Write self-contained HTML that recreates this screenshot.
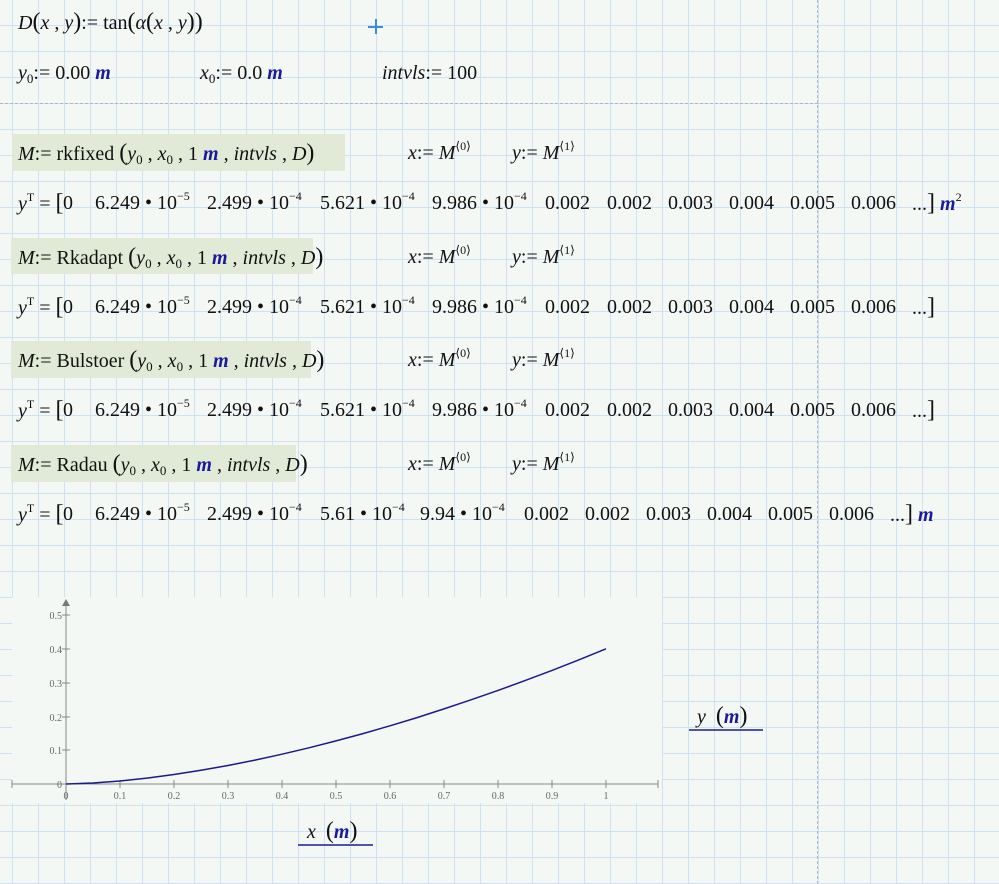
<!DOCTYPE html>
<html><head><meta charset="utf-8"><style>
body{margin:0;width:999px;height:884px;overflow:hidden;position:relative;background-color:#f4f8f5;
background-image:linear-gradient(to right,#cfe2f3 1px,transparent 1px),linear-gradient(to bottom,#cfe2f3 1px,transparent 1px);
background-size:26px 26px;background-position:12px 25px;font-family:"Liberation Serif",serif;color:#111;}
.t{position:absolute;font-size:20px;line-height:24px;white-space:nowrap}
i{font-style:italic}
.u{color:#1a1a9a;font-weight:bold;font-style:italic}
.g{position:absolute;background:#e1ead6}
sup{font-size:12px;vertical-align:9px;line-height:0}
sub{font-size:13px;vertical-align:-4px;line-height:0}
.p{font-size:24px}
</style></head><body>
<div style="position:absolute;left:817px;top:0;height:884px;border-left:1.5px dashed #a9b9c6"></div>
<div style="position:absolute;left:0;top:103px;width:818px;border-top:1.5px dashed #a9b9c6"></div>
<div style="position:absolute;left:368px;top:26px;width:15px;height:1.5px;background:#3b8be0"></div>
<div style="position:absolute;left:375px;top:19px;width:1.5px;height:15px;background:#3b8be0"></div>

<div class="t" style="left:18px;top:10px"><i>D</i><span class="p">(</span><i>x</i> , <i>y</i><span class="p">)</span>:= tan<span class="p">(</span><i>α</i><span class="p">(</span><i>x</i> , <i>y</i><span class="p">))</span></div>
<div class="t" style="left:18px;top:61px"><i>y</i><sub>0</sub>:= 0.00 <span class="u">m</span></div>
<div class="t" style="left:200px;top:61px"><i>x</i><sub>0</sub>:= 0.0 <span class="u">m</span></div>
<div class="t" style="left:382px;top:61px"><i>intvls</i>:= 100</div>

<div class="g" style="left:12px;top:134px;width:333px;height:37px"></div>
<div class="g" style="left:11px;top:238px;width:302px;height:36px"></div>
<div class="g" style="left:11px;top:341px;width:300px;height:37px"></div>
<div class="g" style="left:11px;top:445px;width:285px;height:37px"></div>

<div class="t" style="left:18px;top:141px"><i>M</i>:= rkfixed <span class="p">(</span><i>y</i><sub>0</sub> , <i>x</i><sub>0</sub> , 1 <span class="u">m</span> , <i>intvls</i> , <i>D</i><span class="p">)</span></div>
<div class="t" style="left:18px;top:245px"><i>M</i>:= Rkadapt <span class="p">(</span><i>y</i><sub>0</sub> , <i>x</i><sub>0</sub> , 1 <span class="u">m</span> , <i>intvls</i> , <i>D</i><span class="p">)</span></div>
<div class="t" style="left:18px;top:348px"><i>M</i>:= Bulstoer <span class="p">(</span><i>y</i><sub>0</sub> , <i>x</i><sub>0</sub> , 1 <span class="u">m</span> , <i>intvls</i> , <i>D</i><span class="p">)</span></div>
<div class="t" style="left:18px;top:452px"><i>M</i>:= Radau <span class="p">(</span><i>y</i><sub>0</sub> , <i>x</i><sub>0</sub> , 1 <span class="u">m</span> , <i>intvls</i> , <i>D</i><span class="p">)</span></div>

<div class="t" style="left:408px;top:141px"><i>x</i>:= <i>M</i><sup>⟨0⟩</sup></div><div class="t" style="left:512px;top:141px"><i>y</i>:= <i>M</i><sup>⟨1⟩</sup></div>
<div class="t" style="left:408px;top:245px"><i>x</i>:= <i>M</i><sup>⟨0⟩</sup></div><div class="t" style="left:512px;top:245px"><i>y</i>:= <i>M</i><sup>⟨1⟩</sup></div>
<div class="t" style="left:408px;top:348px"><i>x</i>:= <i>M</i><sup>⟨0⟩</sup></div><div class="t" style="left:512px;top:348px"><i>y</i>:= <i>M</i><sup>⟨1⟩</sup></div>
<div class="t" style="left:408px;top:452px"><i>x</i>:= <i>M</i><sup>⟨0⟩</sup></div><div class="t" style="left:512px;top:452px"><i>y</i>:= <i>M</i><sup>⟨1⟩</sup></div>

<div class="t" style="left:18px;top:191px"><i>y</i><sup>T</sup> = <span class="p">[</span></div>
<div class="t" style="left:63px;top:191px">0</div><div class="t" style="left:95px;top:191px">6.249 • 10<sup>−5</sup></div><div class="t" style="left:207px;top:191px">2.499 • 10<sup>−4</sup></div><div class="t" style="left:320px;top:191px">5.621 • 10<sup>−4</sup></div><div class="t" style="left:432px;top:191px">9.986 • 10<sup>−4</sup></div>
<div class="t" style="left:545px;top:191px">0.002</div><div class="t" style="left:607px;top:191px">0.002</div><div class="t" style="left:668px;top:191px">0.003</div><div class="t" style="left:729px;top:191px">0.004</div><div class="t" style="left:790px;top:191px">0.005</div><div class="t" style="left:851px;top:191px">0.006</div><div class="t" style="left:912px;top:191px">...<span class="p">]</span> <span class="u">m</span><sup>2</sup></div>

<div class="t" style="left:18px;top:295px"><i>y</i><sup>T</sup> = <span class="p">[</span></div>
<div class="t" style="left:63px;top:295px">0</div><div class="t" style="left:95px;top:295px">6.249 • 10<sup>−5</sup></div><div class="t" style="left:207px;top:295px">2.499 • 10<sup>−4</sup></div><div class="t" style="left:320px;top:295px">5.621 • 10<sup>−4</sup></div><div class="t" style="left:432px;top:295px">9.986 • 10<sup>−4</sup></div>
<div class="t" style="left:545px;top:295px">0.002</div><div class="t" style="left:607px;top:295px">0.002</div><div class="t" style="left:668px;top:295px">0.003</div><div class="t" style="left:729px;top:295px">0.004</div><div class="t" style="left:790px;top:295px">0.005</div><div class="t" style="left:851px;top:295px">0.006</div><div class="t" style="left:912px;top:295px">...<span class="p">]</span></div>

<div class="t" style="left:18px;top:398px"><i>y</i><sup>T</sup> = <span class="p">[</span></div>
<div class="t" style="left:63px;top:398px">0</div><div class="t" style="left:95px;top:398px">6.249 • 10<sup>−5</sup></div><div class="t" style="left:207px;top:398px">2.499 • 10<sup>−4</sup></div><div class="t" style="left:320px;top:398px">5.621 • 10<sup>−4</sup></div><div class="t" style="left:432px;top:398px">9.986 • 10<sup>−4</sup></div>
<div class="t" style="left:545px;top:398px">0.002</div><div class="t" style="left:607px;top:398px">0.002</div><div class="t" style="left:668px;top:398px">0.003</div><div class="t" style="left:729px;top:398px">0.004</div><div class="t" style="left:790px;top:398px">0.005</div><div class="t" style="left:851px;top:398px">0.006</div><div class="t" style="left:912px;top:398px">...<span class="p">]</span></div>

<div class="t" style="left:18px;top:502px"><i>y</i><sup>T</sup> = <span class="p">[</span></div>
<div class="t" style="left:63px;top:502px">0</div><div class="t" style="left:95px;top:502px">6.249 • 10<sup>−5</sup></div><div class="t" style="left:207px;top:502px">2.499 • 10<sup>−4</sup></div><div class="t" style="left:320px;top:502px">5.61 • 10<sup>−4</sup></div><div class="t" style="left:420px;top:502px">9.94 • 10<sup>−4</sup></div>
<div class="t" style="left:524px;top:502px">0.002</div><div class="t" style="left:585px;top:502px">0.002</div><div class="t" style="left:646px;top:502px">0.003</div><div class="t" style="left:707px;top:502px">0.004</div><div class="t" style="left:768px;top:502px">0.005</div><div class="t" style="left:829px;top:502px">0.006</div><div class="t" style="left:890px;top:502px">...<span class="p">]</span> <span class="u">m</span></div>

<div style="position:absolute;left:12px;top:597px;width:650px;height:206px;background:#f4f8f5"></div>
<svg style="position:absolute;left:0;top:0" width="999" height="884" font-family="Liberation Serif, serif" font-size="10" fill="#666">
<g stroke="#888" stroke-width="1">
<line x1="12" y1="784" x2="658" y2="784"/><line x1="66" y1="602" x2="66" y2="800"/>
<line x1="12" y1="780" x2="12" y2="788"/>
<line x1="120" y1="780" x2="120" y2="788"/><line x1="174" y1="780" x2="174" y2="788"/><line x1="228" y1="780" x2="228" y2="788"/><line x1="282" y1="780" x2="282" y2="788"/><line x1="336" y1="780" x2="336" y2="788"/><line x1="390" y1="780" x2="390" y2="788"/><line x1="444" y1="780" x2="444" y2="788"/><line x1="498" y1="780" x2="498" y2="788"/><line x1="552" y1="780" x2="552" y2="788"/><line x1="606" y1="780" x2="606" y2="788"/><line x1="658" y1="780" x2="658" y2="788"/>
<line x1="62" y1="615" x2="70" y2="615"/><line x1="62" y1="649" x2="70" y2="649"/><line x1="62" y1="683" x2="70" y2="683"/><line x1="62" y1="717" x2="70" y2="717"/><line x1="62" y1="750" x2="70" y2="750"/>
</g>
<polygon points="66,599 62,606 70,606" fill="#777"/>
<g text-anchor="end"><text x="62" y="619">0.5</text><text x="62" y="653">0.4</text><text x="62" y="687">0.3</text><text x="62" y="721">0.2</text><text x="62" y="754">0.1</text><text x="62" y="788">0</text></g>
<g text-anchor="middle"><text x="66" y="799">0</text><text x="120" y="799">0.1</text><text x="174" y="799">0.2</text><text x="228" y="799">0.3</text><text x="282" y="799">0.4</text><text x="336" y="799">0.5</text><text x="390" y="799">0.6</text><text x="444" y="799">0.7</text><text x="498" y="799">0.8</text><text x="552" y="799">0.9</text><text x="606" y="799">1</text></g>
<polyline fill="none" stroke="#1a1a8a" stroke-width="1.5" points="66,784 93,783 120,781 147,778.1 174,774.5 201,770.3 228,765.5 255,760.1 282,754.2 309,747.8 336,740.9 363,733.6 390,725.8 417,717.6 444,708.9 471,699.8 498,690.4 525,680.6 552,670.4 579,659.8 606,648.8"/>
<line x1="298" y1="845" x2="373" y2="845" stroke="#1a1a9a" stroke-width="1.5"/>
<line x1="689" y1="730" x2="763" y2="730" stroke="#1a1a9a" stroke-width="1.5"/>
</svg>
<div class="t" style="left:307px;top:819px"><i>x</i> &nbsp;<span class="p">(</span><span class="u">m</span><span class="p">)</span></div>
<div class="t" style="left:697px;top:704px"><i>y</i> &nbsp;<span class="p">(</span><span class="u">m</span><span class="p">)</span></div>
</body></html>
